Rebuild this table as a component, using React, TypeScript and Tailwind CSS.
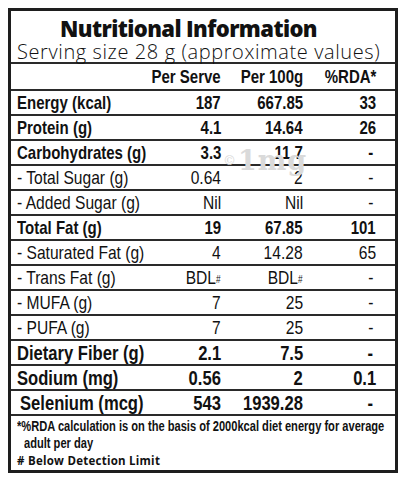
import React from 'react'

type Row = {
    label: string
    serve: React.ReactNode
    p100: React.ReactNode
    rda: string
    bold?: boolean
    big?: boolean
}

const bdl = <>BDL<sup className="text-[10px] relative -top-[1px]">#</sup></>

const rows: Row[] = [
    {label: 'Energy (kcal)', serve: '187', p100: '667.85', rda: '33', bold: true},
    {label: 'Protein (g)', serve: '4.1', p100: '14.64', rda: '26', bold: true},
    {label: 'Carbohydrates (g)', serve: '3.3', p100: '11.7', rda: '-', bold: true},
    {label: '- Total Sugar (g)', serve: '0.64', p100: '2', rda: '-'},
    {label: '- Added Sugar (g)', serve: 'Nil', p100: 'Nil', rda: '-'},
    {label: 'Total Fat (g)', serve: '19', p100: '67.85', rda: '101', bold: true},
    {label: '- Saturated Fat (g)', serve: '4', p100: '14.28', rda: '65'},
    {label: '- Trans Fat (g)', serve: bdl, p100: bdl, rda: '-'},
    {label: '- MUFA (g)', serve: '7', p100: '25', rda: '-'},
    {label: '- PUFA (g)', serve: '7', p100: '25', rda: '-'},
    {label: 'Dietary Fiber (g)', serve: '2.1', p100: '7.5', rda: '-', bold: true, big: true},
    {label: 'Sodium (mg)', serve: '0.56', p100: '2', rda: '0.1', bold: true, big: true},
    {label: 'Selenium (mcg)', serve: '543', p100: '1939.28', rda: '-', bold: true, big: true},
]

const sans = "font-['Liberation_Sans',Arial,sans-serif]"

// condensed look: Arial squeezed sideways
function L({children, bold}: {children: React.ReactNode, bold?: boolean}) {
    return <span className={`inline-block whitespace-nowrap origin-left ${bold ? 'scale-x-[0.79]' : 'scale-x-[0.82]'}`}>{children}</span>
}

function R({children, bold}: {children: React.ReactNode, bold?: boolean}) {
    return <span className={`inline-block whitespace-nowrap origin-right ${bold ? 'scale-x-[0.79]' : 'scale-x-[0.82]'}`}>{children}</span>
}

export default function App() {
    return (
        <div className="w-[405px] h-[480px] bg-white pt-2 pl-2 overflow-hidden">
            <div className="w-[390px] h-[465px] border-[3px] border-[#1e1e1e] flex flex-col text-[#111] overflow-hidden">

                {/* heading */}
                <div className="h-[53px] shrink-0 border-b-2 border-[#2a2a2a] font-['Open_Sans',sans-serif]">
                    <div className="pl-[49px] pt-[4px] text-[22px] leading-[26px] font-extrabold tracking-[-0.6px]">
                        Nutritional Information
                    </div>
                    <div className="pl-[6px] text-[20px] leading-[21px] font-light tracking-[0.6px] whitespace-nowrap">
                        Serving size 28 g (approximate values)
                    </div>
                </div>

                {/* column titles */}
                <div className={`h-[27px] shrink-0 border-b-2 border-[#2a2a2a] grid grid-cols-[139px_71px_82px_73px] items-center font-bold text-[19px] leading-[25px] ${sans}`}>
                    <div></div>
                    <div className="flex justify-end"><R bold>Per Serve</R></div>
                    <div className="flex justify-end"><R bold>Per 100g</R></div>
                    <div className="flex justify-end"><R bold>%RDA*</R></div>
                </div>

                {/* values */}
                <div className="relative shrink-0">
                    {rows.map((r) => (
                        <div key={r.label}
                             className={`h-[25px] border-b-2 border-[#2a2a2a] grid grid-cols-[139px_71px_82px_73px] items-center leading-[23px] ${sans} ${r.bold ? 'font-bold' : 'font-normal'} ${r.big ? 'text-[21px]' : 'text-[19px]'}`}>
                            <div className={r.label.startsWith('Selenium') ? 'pl-[9px]' : 'pl-[6px]'}><L bold={r.bold}>{r.label}</L></div>
                            <div className="flex justify-end"><R bold={r.bold}>{r.serve}</R></div>
                            <div className="flex justify-end"><R bold={r.bold}>{r.p100}</R></div>
                            <div className={`flex justify-end ${r.rda === '-' ? 'pr-[3px]' : ''}`}><R bold={r.bold}>{r.rda}</R></div>
                        </div>
                    ))}
                    <div className="absolute left-[212px] top-[56px] flex items-center gap-[2px] text-[#dadada] font-['DejaVu_Serif',serif] pointer-events-none">
                        <span className="text-[13px] leading-none">©</span>
                        <span className="text-[27px] leading-none font-bold tracking-[1px]">1mg</span>
                    </div>
                </div>

                {/* footnote */}
                <div className="flex-1 pl-[6px] pt-[1px]">
                    <div className={`text-[15px] leading-[17px] font-bold ${sans}`}>
                        <span className="inline-block whitespace-nowrap origin-left scale-x-[0.74]">
                            *%RDA calculation is on the basis of 2000kcal diet energy for average
                        </span>
                    </div>
                    <div className={`pl-[7px] text-[15px] leading-[17px] font-bold ${sans}`}>
                        <span className="inline-block whitespace-nowrap origin-left scale-x-[0.74]">adult per day</span>
                    </div>
                    <div className="mt-[3px] text-[11.5px] leading-[14px] font-bold tracking-[0.25px] font-['Open_Sans',sans-serif] whitespace-nowrap"># Below Detection Limit</div>
                </div>

            </div>
        </div>
    )
}
